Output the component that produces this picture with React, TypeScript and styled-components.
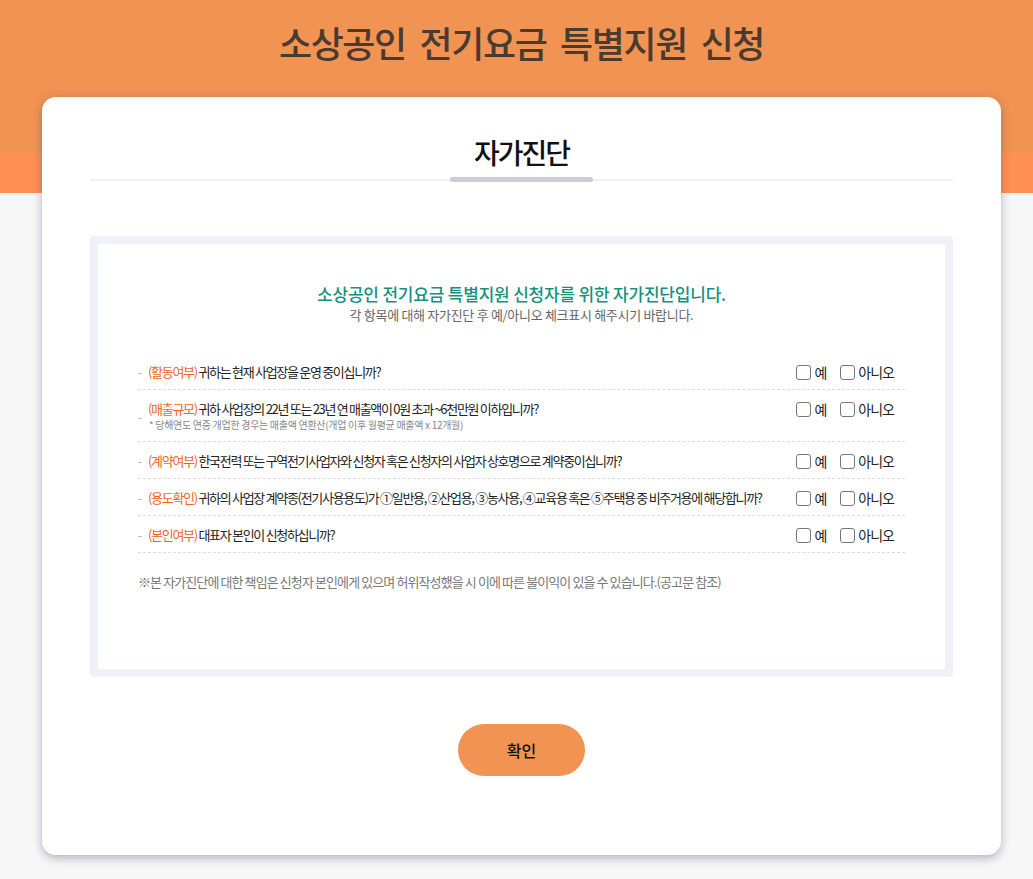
import { ReactElement, useState } from 'react';
import styled, { createGlobalStyle } from 'styled-components';

interface Question {
  tag: string;
  text: string;
  note?: string;
}

const questions: Question[] = [
  { tag: '(활동여부)', text: '귀하는 현재 사업장을 운영 중이십니까?' },
  {
    tag: '(매출규모)',
    text: '귀하 사업장의 22년 또는 23년 연 매출액이 0원 초과 ~6천만원 이하입니까?',
    note: '* 당해연도 연중 개업한 경우는 매출액 연환산(개업 이후 월평균 매출액 x 12개월)',
  },
  {
    tag: '(계약여부)',
    text: '한국전력 또는 구역전기사업자와 신청자 혹은 신청자의 사업자 상호명으로 계약중이십니까?',
  },
  {
    tag: '(용도확인)',
    text: '귀하의 사업장 계약종(전기사용용도)가 ①일반용, ②산업용, ③농사용, ④교육용 혹은 ⑤주택용 중 비주거용에 해당합니까?',
  },
  { tag: '(본인여부)', text: '대표자 본인이 신청하십니까?' },
];

type Answer = 'yes' | 'no' | null;

const App = (): ReactElement => {
  const [answers, setAnswers] = useState<Answer[]>(questions.map(() => null));

  const pick = (idx: number, value: Answer) => {
    setAnswers((prev) => prev.map((a, i) => (i === idx ? (a === value ? null : value) : a)));
  };

  return (
    <>
      <GlobalStyle />
      <Page>
        <PageTitle>소상공인 전기요금 특별지원 신청</PageTitle>
        <Card>
          <CardTitle>자가진단</CardTitle>
          <Rule>
            <RuleBar />
          </Rule>

          <Box>
            <Intro>소상공인 전기요금 특별지원 신청자를 위한 자가진단입니다.</Intro>
            <IntroSub>각 항목에 대해 자가진단 후 예/아니오 체크표시 해주시기 바랍니다.</IntroSub>

            <List>
              {questions.map((q, i) => (
                <Row key={q.tag}>
                  <Dash>-</Dash>
                  <QBody>
                    <QText>
                      <Tag>{q.tag}</Tag> {q.text}
                    </QText>
                    {q.note ? <Note>{q.note}</Note> : null}
                  </QBody>
                  <Choices>
                    <Choice onClick={() => pick(i, 'yes')}>
                      <Box15 $checked={answers[i] === 'yes'} />
                      예
                    </Choice>
                    <Choice onClick={() => pick(i, 'no')}>
                      <Box15 $checked={answers[i] === 'no'} />
                      아니오
                    </Choice>
                  </Choices>
                </Row>
              ))}
            </List>

            <Footnote>
              ※본 자가진단에 대한 책임은 신청자 본인에게 있으며 허위작성했을 시 이에 따른 불이익이 있을 수
              있습니다.(공고문 참조)
            </Footnote>
          </Box>

          <ConfirmButton type="button">확인</ConfirmButton>
        </Card>
      </Page>
    </>
  );
};

const GlobalStyle = createGlobalStyle`
  html, body {
    margin: 0;
    padding: 0;
    background: #f7f7f7;
  }
  body {
    font-family: "Noto Sans CJK KR", "Noto Sans", sans-serif;
  }
  * {
    box-sizing: border-box;
  }
`;

const Page = styled.div`
  min-height: 879px;
  padding-bottom: 23px;
  background: linear-gradient(
    to bottom,
    #f09353 0,
    #f09353 153px,
    #ff8f52 153px,
    #ff8f52 193px,
    #f7f7f7 193px
  );
`;

const PageTitle = styled.h1`
  margin: 0;
  height: 97px;
  padding-top: 20px;
  padding-left: 10px;
  line-height: 44px;
  text-align: center;
  font-size: 36px;
  font-weight: 500;
  letter-spacing: -1.4px;
  word-spacing: 7px;
  color: #4b3a2e;
`;

const Card = styled.div`
  margin-left: 42px;
  width: 959px;
  background: #fff;
  border-radius: 14px;
  box-shadow: 0 3px 10px rgba(70, 70, 110, 0.4);
  padding: 37px 48px 79px;
  display: flex;
  flex-direction: column;
`;

const CardTitle = styled.h2`
  margin: 0;
  text-align: center;
  font-size: 28px;
  line-height: 36px;
  font-weight: 500;
  letter-spacing: -2px;
  color: #111;
`;

const Rule = styled.div`
  margin-top: 7px;
  height: 5px;
  background: linear-gradient(#eef1f5, #eef1f5) center / 100% 2px no-repeat;
  display: flex;
  justify-content: center;
`;

const RuleBar = styled.div`
  width: 143px;
  height: 5px;
  border-radius: 3px;
  background: #c8cfdb;
`;

const Box = styled.div`
  margin-top: 54px;
  border: 8px solid #eef1f5;
  border-radius: 4px;
  padding: 39px 40px 79px;
`;

const Intro = styled.p`
  margin: 0;
  text-align: center;
  font-size: 17px;
  line-height: 22px;
  letter-spacing: -0.2px;
  color: #16917f;
  font-weight: 500;
`;

const IntroSub = styled.p`
  margin: 0;
  text-align: center;
  font-size: 13px;
  line-height: 20px;
  letter-spacing: -0.3px;
  color: #666;
`;

const List = styled.div`
  margin-top: 28px;
`;

const Row = styled.div`
  display: flex;
  align-items: flex-start;
  padding: 10px 0 9px;
  border-bottom: 1px dashed #dcdcdc;
`;

const Dash = styled.span`
  align-self: center;
  width: 10px;
  font-size: 12px;
  line-height: 17px;
  color: #aaa;
`;

const QBody = styled.div`
  flex: 1;
  min-width: 0;
`;

const QText = styled.div`
  font-size: 13px;
  line-height: 17px;
  letter-spacing: -1.3px;
  color: #222;
`;

const Tag = styled.span`
  color: #f0641e;
`;

const Note = styled.div`
  font-size: 10px;
  line-height: 15px;
  letter-spacing: -0.3px;
  color: #888;
  padding-left: 1px;
`;

const Choices = styled.div`
  display: flex;
  gap: 14px;
  margin-top: 2px;
  margin-right: 11px;
`;

const Choice = styled.label`
  display: flex;
  align-items: center;
  gap: 3px;
  height: 15px;
  font-size: 14px;
  line-height: 15px;
  letter-spacing: -1px;
  color: #222;
  cursor: pointer;
`;

const Box15 = styled.span<{ $checked: boolean }>`
  width: 15px;
  height: 15px;
  border: 1px solid #777;
  border-radius: 3px;
  background: ${(p) => (p.$checked ? '#f09353' : '#fff')};
`;

const Footnote = styled.p`
  margin: 20px 0 0;
  font-size: 13px;
  line-height: 17px;
  letter-spacing: -0.9px;
  color: #777;
`;

const ConfirmButton = styled.button`
  align-self: center;
  margin-top: 47px;
  width: 127px;
  height: 52px;
  border: none;
  border-radius: 26px;
  background: #f09353;
  font-family: "Noto Sans CJK KR", sans-serif;
  font-size: 16px;
  font-weight: 500;
  color: #111;
  cursor: pointer;
`;

export default App;
